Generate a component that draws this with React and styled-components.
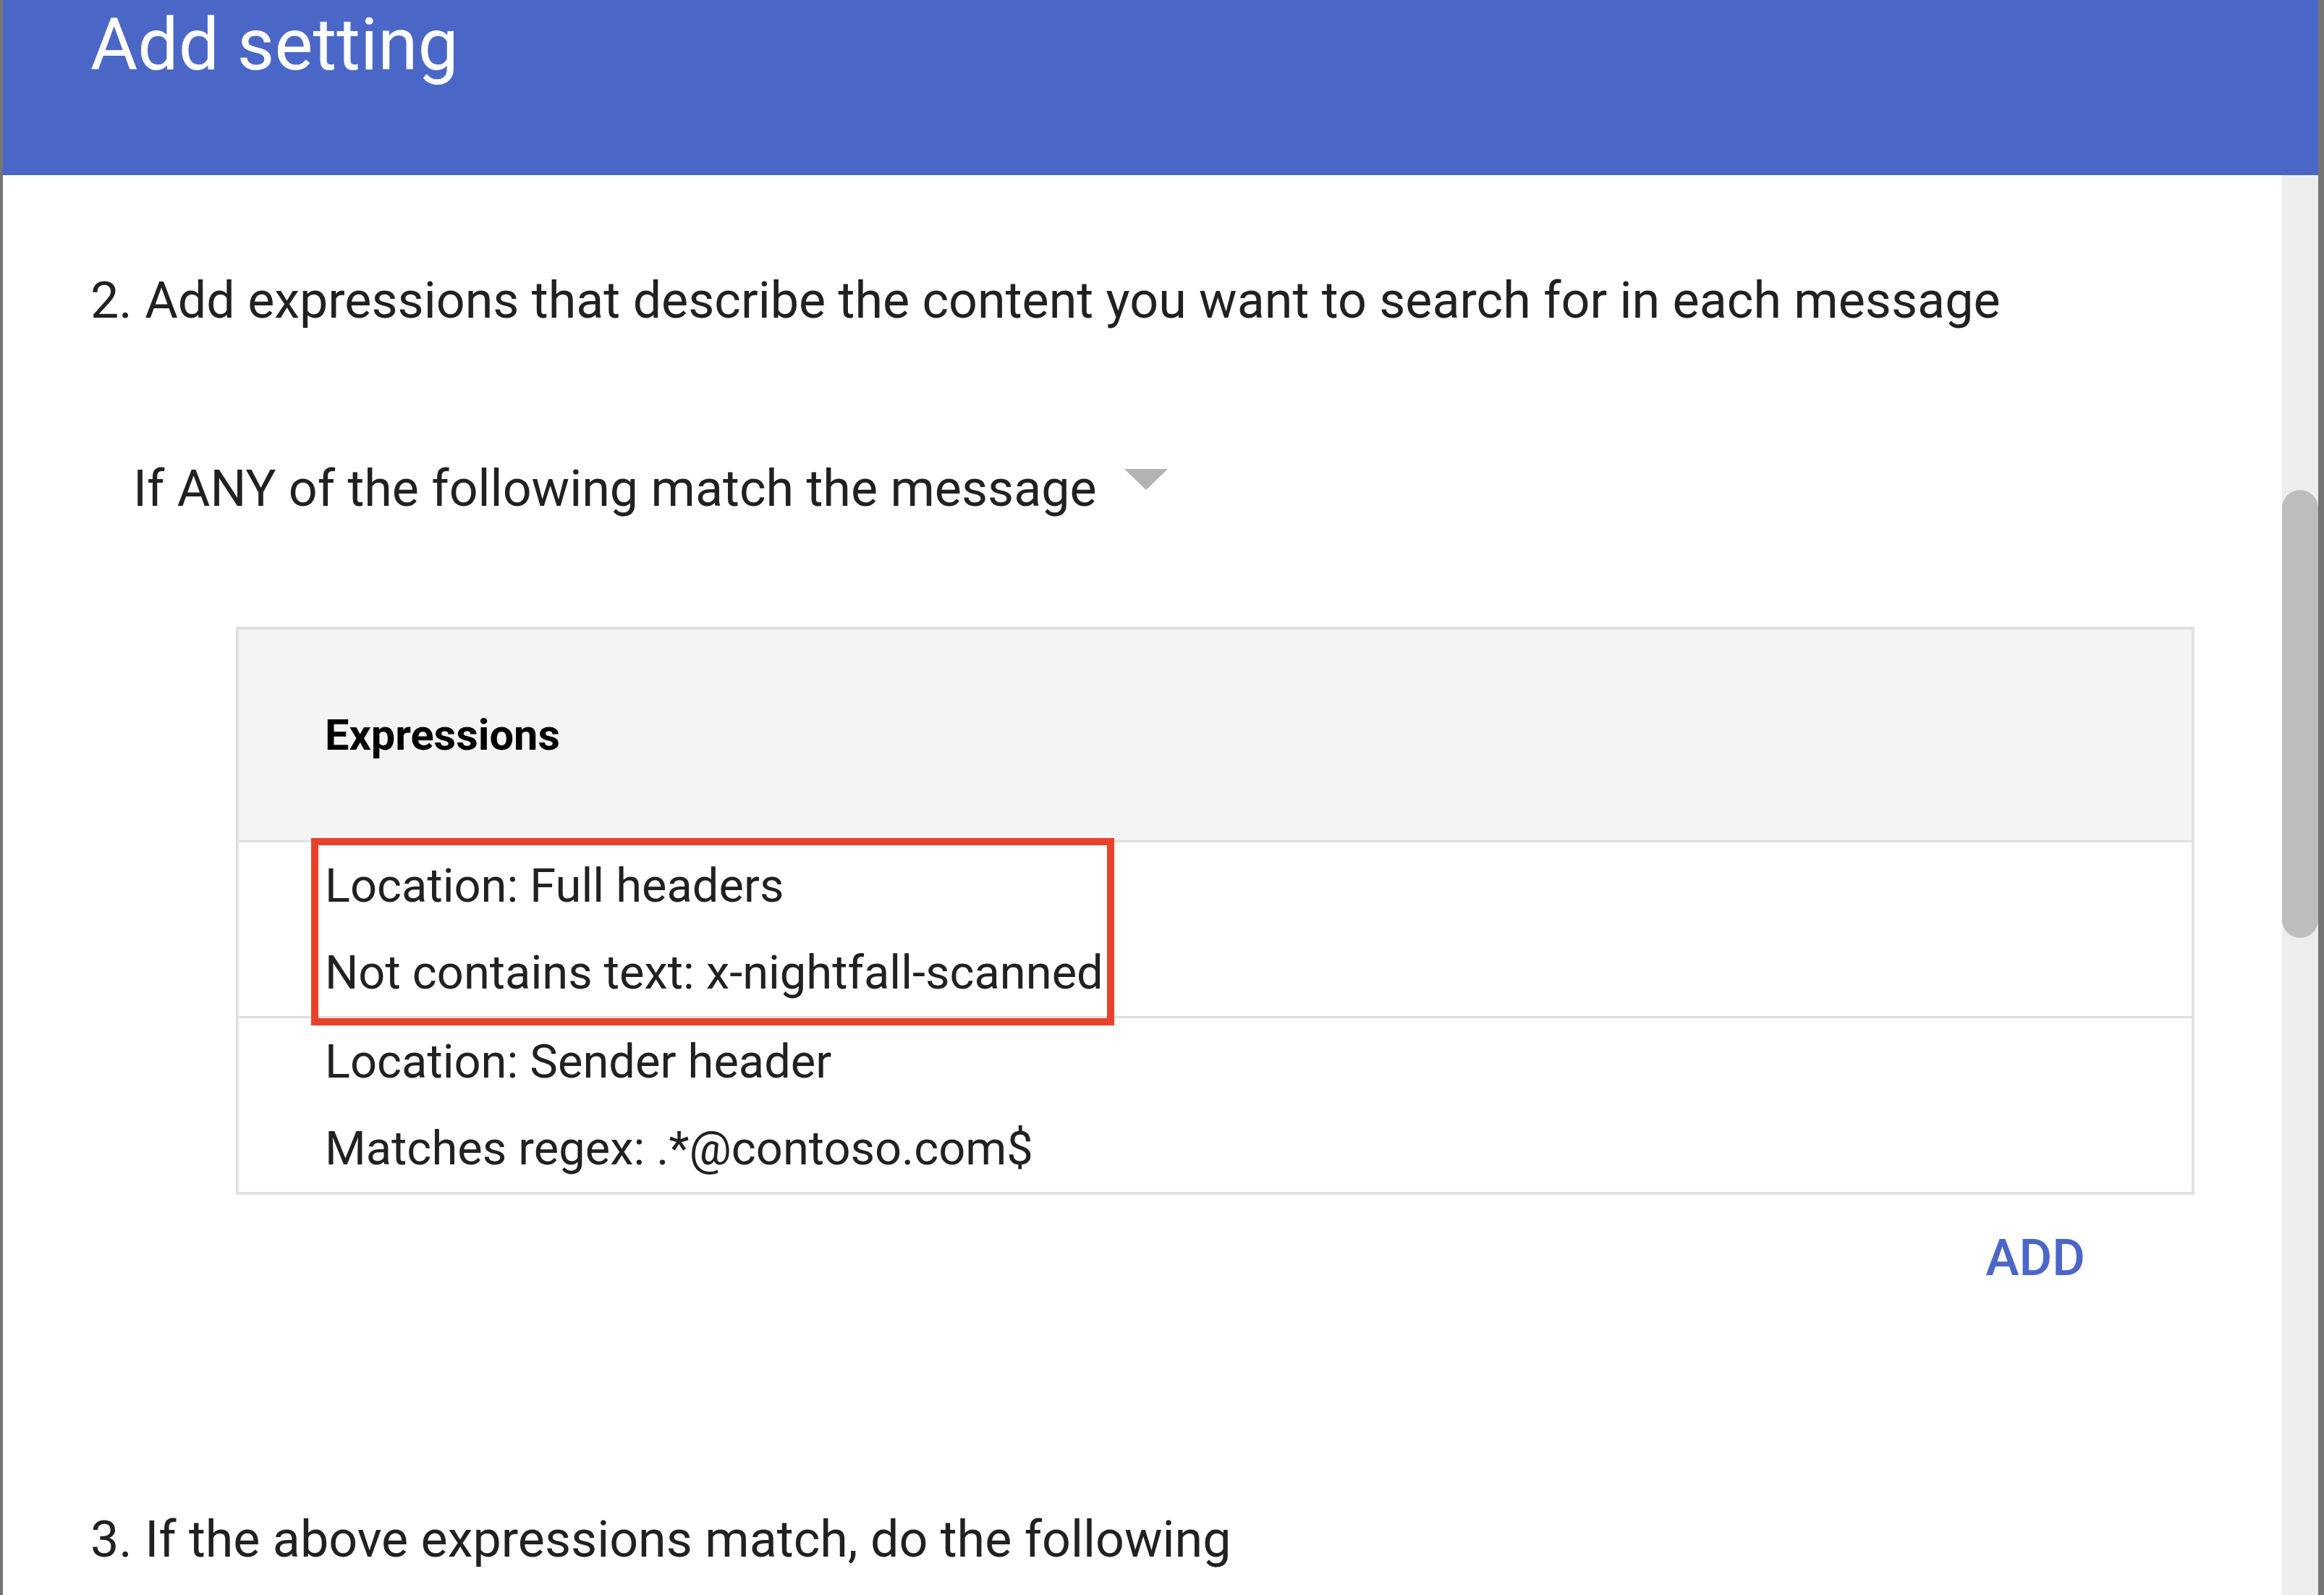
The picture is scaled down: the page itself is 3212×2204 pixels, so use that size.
import React from 'react';
import styled, { createGlobalStyle } from 'styled-components';

const GlobalStyle = createGlobalStyle`
  html, body {
    margin: 0;
    padding: 0;
    overflow: hidden;
    background: #757575;
  }
  body {
    font-family: Roboto, 'Noto Sans', sans-serif;
  }
`;

const Frame = styled.div`
  display: flex;
  width: 3212px;
  height: 2204px;
  padding: 0 8px 0 4px;
  box-sizing: border-box;
  background: #757575;
`;

const Dialog = styled.div`
  display: flex;
  flex: 1;
  flex-direction: column;
  background: #ffffff;
  overflow: hidden;
`;

const Header = styled.div`
  height: 242px;
  flex-shrink: 0;
  box-sizing: border-box;
  padding: 12px 121px 0;
  background: #4a67c8;
`;

const Title = styled.h1`
  margin: 0;
  font-family: Roboto, sans-serif;
  font-size: 100px;
  font-weight: 400;
  line-height: 100px;
  color: #ffffff;
`;

const Body = styled.div`
  display: flex;
  flex: 1;
  min-height: 0;
`;

const Content = styled.div`
  display: flex;
  flex: 1;
  flex-direction: column;
  padding: 133px 121px 0;
`;

const Track = styled.div`
  width: 50px;
  flex-shrink: 0;
  background: #ededed;
`;

const Thumb = styled.div`
  margin-top: 435px;
  height: 619px;
  border-radius: 25px;
  background: #bdbdbd;
`;

const Step = styled.p`
  margin: ${({ $top }) => $top || 0}px 0 0;
  font-size: 70px;
  line-height: 80px;
  color: #212121;
`;

const MatchRow = styled.div`
  display: flex;
  align-items: flex-start;
  margin-top: 180px;
  padding-left: 59px;
`;

const MatchLabel = styled.span`
  font-size: 70px;
  line-height: 80px;
  color: #212121;
`;

const Caret = styled.span`
  width: 0;
  height: 0;
  margin: 13px 0 0 38px;
  border-left: 30px solid transparent;
  border-right: 30px solid transparent;
  border-top: 29px solid #b3b3b3;
`;

const Table = styled.div`
  margin: 151px 0 0 201px;
  border: 4px solid #e0e0e0;
`;

const TableHead = styled.div`
  display: flex;
  align-items: center;
  height: 291px;
  padding-left: 119px;
  background: #f4f4f4;
  border-bottom: 3px solid #e0e0e0;
  font-size: 59.5px;
  font-weight: 700;
  color: #000000;
`;

const Row = styled.div`
  position: relative;
  display: flex;
  flex-direction: column;
  padding-left: 119px;
  border-bottom: ${({ $last }) => ($last ? 'none' : '3px solid #e0e0e0')};
`;

const Line = styled.div`
  font-size: 65px;
  line-height: 120px;
  color: #212121;
`;

const Highlight = styled.div`
  position: absolute;
  top: -6px;
  left: 100px;
  width: 1110px;
  height: 259px;
  box-sizing: border-box;
  border: 10px solid #e8432a;
  pointer-events: none;
`;

const Actions = styled.div`
  display: flex;
  justify-content: flex-end;
  margin-top: 47px;
  padding-right: 151px;
`;

const TextButton = styled.button`
  padding: 0;
  border: none;
  background: none;
  font-family: Roboto, sans-serif;
  font-size: 70px;
  font-weight: 500;
  line-height: 80px;
  color: #4a67c8;
`;

const expressions = [
  ['Location: Full headers', 'Not contains text: x-nightfall-scanned'],
  ['Location: Sender header', 'Matches regex: .*@contoso.com$'],
];

const App = () => (
  <Frame>
    <GlobalStyle />
    <Dialog>
      <Header>
        <Title>Add setting</Title>
      </Header>
      <Body>
        <Content>
          <Step>2. Add expressions that describe the content you want to search for in each message</Step>
          <MatchRow>
            <MatchLabel>If ANY of the following match the message</MatchLabel>
            <Caret />
          </MatchRow>
          <Table>
            <TableHead>Expressions</TableHead>
            {expressions.map((lines, i) => (
              <Row key={lines[0]} $last={i === expressions.length - 1}>
                {lines.map((text) => (
                  <Line key={text}>{text}</Line>
                ))}
                {i === 0 && <Highlight />}
              </Row>
            ))}
          </Table>
          <Actions>
            <TextButton>ADD</TextButton>
          </Actions>
          <Step $top={309}>3. If the above expressions match, do the following</Step>
        </Content>
        <Track>
          <Thumb />
        </Track>
      </Body>
    </Dialog>
  </Frame>
);

export default App;
